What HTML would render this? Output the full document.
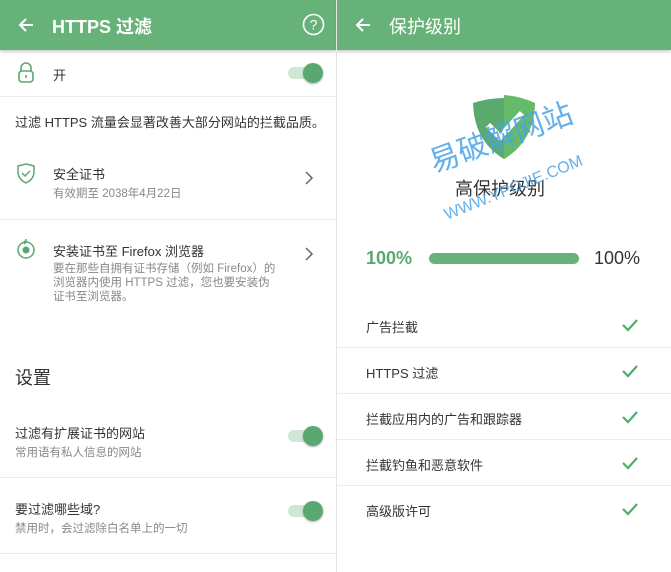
<!DOCTYPE html>
<html><head><meta charset="utf-8"><style>
*{margin:0;padding:0;box-sizing:border-box}
body{width:671px;height:572px;position:relative;background:#fff;overflow:hidden;font-family:"Liberation Sans","Noto Sans CJK SC",sans-serif;color:#333}
.a{position:absolute;white-space:nowrap}
.hdr{position:absolute;top:0;height:50px;background:#67b279;box-shadow:0 2px 3px rgba(0,0,0,.2)}
.ht{color:#fff;font-size:18px;top:13px}
.hr{position:absolute;height:1px;background:#ececec}
.t{font-size:13px;color:#333}
.s{font-size:11.5px;color:#888}
.sw{position:absolute;width:32px;height:12px;border-radius:6px;background:#cfe7d5}
.sw:after{content:"";position:absolute;right:-3px;top:-4px;width:20px;height:20px;border-radius:50%;background:#5aa870;box-shadow:0 1px 2px rgba(0,0,0,.3)}
.ck{position:absolute;left:622px}
</style></head><body>
<div class="hdr" style="left:0;width:336px"></div>
<div class="hdr" style="left:337px;width:334px"></div>
<div style="position:absolute;left:336px;top:0;width:1px;height:572px;background:#e5e5e5"></div>
<svg class="a" style="left:17px;top:16px" width="18" height="18" viewBox="0 0 18 18"><path d="M16 9H3M9 3L3 9l6 6" stroke="#fff" stroke-width="2" fill="none"/></svg>
<div class="a ht" style="left:52px;font-weight:bold">HTTPS 过滤</div>
<svg class="a" style="left:302px;top:13px" width="23" height="23" viewBox="0 0 23 23"><circle cx="11.5" cy="11.5" r="10" stroke="#fff" stroke-width="1.6" fill="none"/><text x="11.5" y="16.5" text-anchor="middle" fill="#fff" font-size="14" font-family="Liberation Sans">?</text></svg>
<svg class="a" style="left:354px;top:16px" width="18" height="18" viewBox="0 0 18 18"><path d="M16 9H3M9 3L3 9l6 6" stroke="#fff" stroke-width="2" fill="none"/></svg>
<div class="a ht" style="left:389px">保护级别</div>

<svg class="a" style="left:17px;top:62px" width="18" height="22" viewBox="0 0 18 22"><path d="M4 9V6a5 5 0 0 1 10 0v3" stroke="#5aa870" stroke-width="1.6" fill="none"/><rect x="2" y="9" width="14" height="11" rx="3" stroke="#5aa870" stroke-width="1.6" fill="none"/><path d="M9 13v3" stroke="#5aa870" stroke-width="1.6"/></svg>
<div class="a t" style="left:53px;top:65px">开</div>
<div class="sw" style="left:288px;top:67px"></div>
<div class="hr" style="left:0;width:336px;top:96px"></div>
<div class="a t" style="left:15px;top:112px">过滤 HTTPS 流量会显著改善大部分网站的拦截品质。</div>
<svg class="a" style="left:16px;top:163px" width="20" height="22" viewBox="0 0 20 22"><path d="M2 3l8-2 8 2v6c0 6-4 9-8 11C6 18 2 15 2 9z" stroke="#5aa870" stroke-width="1.5" fill="none"/><path d="M6 10l3 3 5-5" stroke="#5aa870" stroke-width="1.5" fill="none"/></svg>
<div class="a t" style="left:53px;top:164px">安全证书</div>
<div class="a s" style="left:53px;top:185px">有效期至 2038年4月22日</div>
<svg class="a" style="left:304px;top:170px" width="10" height="16" viewBox="0 0 10 16"><path d="M2 2l6 6-6 6" stroke="#666" stroke-width="1.5" fill="none"/></svg>
<div class="hr" style="left:0;width:336px;top:219px"></div>
<svg class="a" style="left:16px;top:238px" width="20" height="22" viewBox="0 0 20 22"><circle cx="10" cy="12" r="8" stroke="#5aa870" stroke-width="1.5" fill="none"/><path d="M10 4V1M8 3l2 1-2 2" stroke="#5aa870" stroke-width="1.5" fill="none"/><circle cx="10" cy="12" r="3.5" fill="#5aa870"/></svg>
<div class="a t" style="left:53px;top:241px">安装证书至 Firefox 浏览器</div>
<div class="a s" style="left:53px;top:262px;line-height:14px">要在那些自拥有证书存储（例如 Firefox）的<br>浏览器内使用 HTTPS 过滤，您也要安装伪<br>证书至浏览器。</div>
<svg class="a" style="left:304px;top:246px" width="10" height="16" viewBox="0 0 10 16"><path d="M2 2l6 6-6 6" stroke="#666" stroke-width="1.5" fill="none"/></svg>
<div class="a" style="left:15px;top:364px;font-size:18px;color:#333">设置</div>
<div class="a t" style="left:15px;top:423px">过滤有扩展证书的网站</div>
<div class="a s" style="left:15px;top:444px">常用语有私人信息的网站</div>
<div class="sw" style="left:288px;top:430px"></div>
<div class="hr" style="left:0;width:336px;top:477px"></div>
<div class="a t" style="left:15px;top:499px">要过滤哪些域?</div>
<div class="a s" style="left:15px;top:520px">禁用时，会过滤除白名单上的一切</div>
<div class="sw" style="left:288px;top:505px"></div>
<div class="hr" style="left:0;width:336px;top:553px"></div>

<svg class="a" style="left:472px;top:95px" width="64" height="64" viewBox="0 0 64 64"><path d="M1 8Q32-2 63 8Q62 46 32 64Q2 46 1 8z" fill="#5aaa6e"/><path d="M32 0Q48 1 63 8Q62 46 32 64z" fill="#66bb6a"/><path d="M16 30l12 12 22-24" stroke="#fff" stroke-width="6" fill="none"/></svg>
<div class="a" style="left:455px;top:175px;font-size:18px;color:#333">高保护级别</div>
<div class="a" style="left:422px;top:140px;font-size:30px;color:#4aa3e8;opacity:.85;transform:rotate(-20deg);transform-origin:left top">易破解网站</div>
<div class="a" style="left:442px;top:208px;font-size:16px;color:#4aa3e8;opacity:.85;transform:rotate(-22deg);transform-origin:left top">WWW.YPOJIE.COM</div>
<div class="a" style="left:366px;top:248px;font-size:18px;font-weight:bold;color:#5aa870">100%</div>
<div style="position:absolute;left:429px;top:253px;width:150px;height:11px;border-radius:6px;background:#67b279"></div>
<div class="a" style="left:594px;top:248px;font-size:18px;color:#333">100%</div>
<div class="a t" style="left:366px;top:317px">广告拦截</div>
<div class="a t" style="left:366px;top:363px">HTTPS 过滤</div>
<div class="a t" style="left:366px;top:409px">拦截应用内的广告和跟踪器</div>
<div class="a t" style="left:366px;top:455px">拦截钓鱼和恶意软件</div>
<div class="a t" style="left:366px;top:501px">高级版许可</div>
<div class="hr" style="left:337px;width:334px;top:347px"></div>
<div class="hr" style="left:337px;width:334px;top:393px"></div>
<div class="hr" style="left:337px;width:334px;top:439px"></div>
<div class="hr" style="left:337px;width:334px;top:485px"></div>
<svg class="ck" style="top:319px" width="16" height="13" viewBox="0 0 16 13"><path d="M1 6l5 5 9-10" stroke="#4caf67" stroke-width="2.2" fill="none"/></svg>
<svg class="ck" style="top:365px" width="16" height="13" viewBox="0 0 16 13"><path d="M1 6l5 5 9-10" stroke="#4caf67" stroke-width="2.2" fill="none"/></svg>
<svg class="ck" style="top:411px" width="16" height="13" viewBox="0 0 16 13"><path d="M1 6l5 5 9-10" stroke="#4caf67" stroke-width="2.2" fill="none"/></svg>
<svg class="ck" style="top:457px" width="16" height="13" viewBox="0 0 16 13"><path d="M1 6l5 5 9-10" stroke="#4caf67" stroke-width="2.2" fill="none"/></svg>
<svg class="ck" style="top:503px" width="16" height="13" viewBox="0 0 16 13"><path d="M1 6l5 5 9-10" stroke="#4caf67" stroke-width="2.2" fill="none"/></svg>
</body></html>
